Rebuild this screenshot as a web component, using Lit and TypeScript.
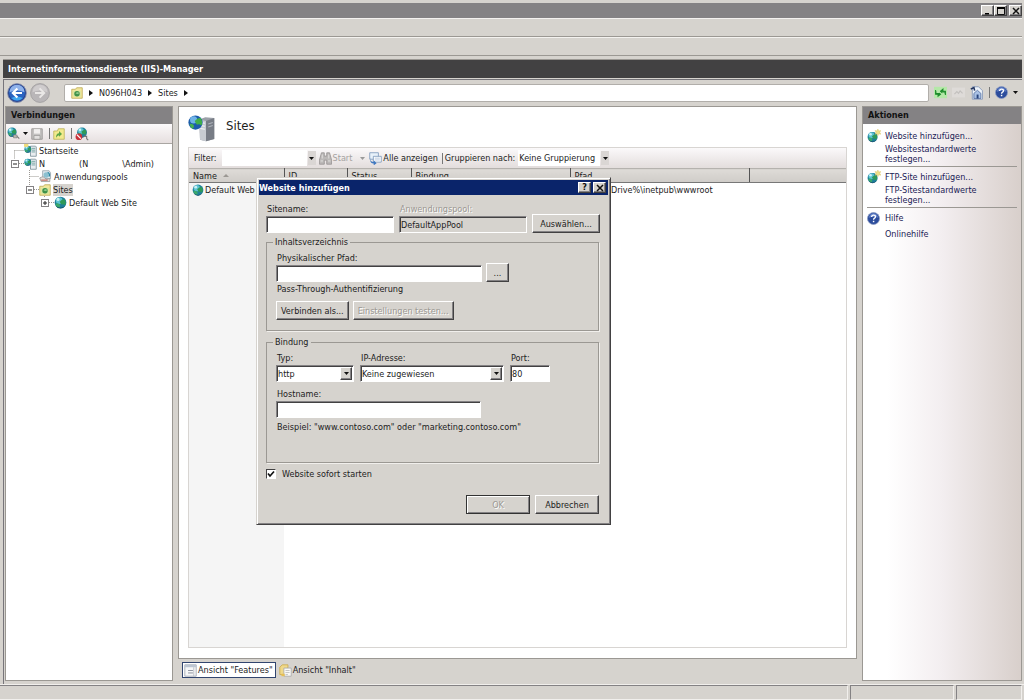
import { LitElement, html, css, svg, nothing } from "lit";
import { customElement, state } from "lit/decorators.js";
import { classMap } from "lit/directives/class-map.js";

/* ---------- shared look ---------- */
const base = css`
  :host {
    --face: #d6d3ce;
    --shadow: #848284;
    --dark: #424142;
    --navy: #0a246a;
    --font: "DejaVu Sans Condensed", "Noto Sans", sans-serif;
    font: 9px/12px var(--font);
    color: #1c1c1c;
    box-sizing: border-box;
  }
  *, *::before, *::after { box-sizing: border-box; }
  button, input, select {
    font: inherit;
    color: inherit;
    margin: 0;
    border-radius: 0;
    outline: none;
  }
  button { cursor: default; }
  svg { display: block; flex: none; }
  .raised {
    background: var(--face);
    border: 1px solid;
    border-color: #fff #424142 #424142 #fff;
    box-shadow: inset -1px -1px 0 #848284;
    padding: 0;
  }
`;

/* ---------- icons ---------- */
const frame = (w: number, h: number, vw: number, vh: number, body: unknown) =>
  html`<svg width=${w} height=${h} viewBox="0 0 ${vw} ${vh}" aria-hidden="true">${body}</svg>`;

const globeShape = svg`
  <circle cx="8" cy="8" r="7.2" fill="#1f7f9a"/>
  <circle cx="6.4" cy="5.6" r="4.2" fill="#5cc3d2"/>
  <circle cx="5" cy="4.2" r="1.9" fill="#c9f1f4"/>
  <path d="M7 7 Q11 3 13.5 4.500 Q15.400 8 13.600 11.500 Q11.500 9.500 9 10.500 Q8 9 7 7Z" fill="#2f9a58"/>
  <path d="M3 9 Q6 8.500 7.500 11 Q7.500 13.500 6.500 14.800 Q2.500 13.500 1.600 10Z" fill="#3aa86b"/>
  <path d="M2 12 Q8 17 14 12 Q11.500 15.600 8 15.500 Q4 15.500 2 12Z" fill="#0d4763"/>`;

const globe = (s = 12) => frame(s, s, 16, 16, globeShape);

const globeNew = () => frame(14, 14, 18, 18, svg`
  <g transform="translate(0 3) scale(.9)">${globeShape}</g>
  <path d="M14 0l1 2.600 2.800-.6-1.400 2.300 1.400 2.400-2.800-.500-1 2.400-1-2.400-2.700.500 1.300-2.400-1.300-2.300 2.700.600z" fill="#efe08a" stroke="#d2bd55" stroke-width=".5"/>`);

const globePlug = () => frame(13, 13, 18, 18, svg`
  <g transform="scale(.88)">${globeShape}</g>
  <path d="M9 11h5v4H9z" fill="#b9b6b1" stroke="#777" stroke-width=".8"/><path d="M14 13l3 3" stroke="#777" stroke-width="1.400"/>`);

const globeStop = () => frame(14, 14, 18, 18, svg`
  <g transform="translate(2 0) scale(.88)">${globeShape}</g>
  <circle cx="5" cy="12.500" r="4.300" fill="#c9303a"/><path d="M2.500 10l5 5" stroke="#fff" stroke-width="1.500"/>
  <path d="M11 12h4v3l2 2" fill="none" stroke="#777" stroke-width="1.400"/>`);

const serverGlobe = (star: boolean) => frame(13, 13, 18, 18, svg`
  <path d="M9 3h7l1 1v13H9z" fill="#e9edf0" stroke="#68808c"/>
  <path d="M10.500 6h5M10.500 8.500h5M10.500 11h5" stroke="#4f8c8c"/>
  <g transform="translate(0 2) scale(.66)">${globeShape}</g>
  ${star ? svg`<path d="M0 0h6v4H0z" fill="#f0dc7c"/>` : nothing}`);

const pools = () => frame(13, 13, 18, 18, svg`
  <path d="M5 1h9l2 3v8H5z" fill="#dfe9ee" stroke="#8c9ba3"/>
  <circle cx="10" cy="7" r="3.800" fill="#8cc0d0"/><path d="M12 3q4 2 2 6" fill="none" stroke="#2d8aa5" stroke-width="1.600"/>
  <path d="M1 11q5-3 7 0t7 1v4H3z" fill="#e2e0dd" stroke="#8e8e8e"/><path d="M3 14h9" stroke="#c05a4a" stroke-width="1.400"/>`);

const sitesFolder = () => frame(12, 12, 16, 16, svg`
  <path d="M1 3h5l1.500-2H15v14H1z" fill="#f3e79a" stroke="#b5a44c"/>
  <path d="M3 5h10v8H3z" fill="#d7e6a0"/>
  <circle cx="8" cy="9" r="3.600" fill="#3f9148"/><path d="M6 8.500l2-2 3 1-1.500 2z" fill="#8fc98a"/>`);

const arrowDot = (dir: "l" | "r") => frame(20, 20, 24, 24, dir === "l"
  ? svg`<circle cx="12" cy="12" r="11.300" fill="#24418f" stroke="#8c93ab" stroke-width="1"/>
      <circle cx="12" cy="12" r="9.600" fill="#2a63c0"/>
      <path d="M3 11a9 9 0 0 1 18 0q-9-4-18 0z" fill="#8fb2ea"/>
      <path d="M5 18q7 6 14 0q-7-3-14 0z" fill="#40a6ee"/>
      <path d="M12.500 6.500L7 12l5.500 5.500M7.500 12H18" fill="none" stroke="#fff" stroke-width="2.600"/>`
  : svg`<circle cx="12" cy="12" r="11.300" fill="#b9b6b8" stroke="#a09d9f" stroke-width="1"/>
      <path d="M3 11a9 9 0 0 1 18 0q-9-4-18 0z" fill="#cfcccd"/>
      <path d="M11.500 6.500L17 12l-5.500 5.500M16.500 12H6" fill="none" stroke="#e9e7e6" stroke-width="2.400"/>`);

const helpIcon = () => frame(13, 13, 16, 16, svg`
  <circle cx="8" cy="8" r="7.400" fill="#2c4c9c" stroke="#8d9cc4"/>
  <path d="M2.500 7a5.500 5.500 0 0 1 11 0q-5.500-2.500-11 0z" fill="#6482c8"/>
  <path d="M5.700 6.200q0-2.400 2.400-2.400t2.300 2q0 1.100-1.200 1.800t-1.100 1.900" fill="none" stroke="#fff" stroke-width="1.600"/><path d="M7.200 10.800h1.800v1.800H7.200z" fill="#fff"/>`);

const saveIcon = () => frame(12, 12, 16, 16, svg`
  <path d="M1 1h14v14H1z" fill="#c4c2c1" stroke="#8f8d8c"/><path d="M4 1.500h8v6H4z" fill="#f1efee"/><path d="M4 10h8v5H4z" fill="#e2e0df" stroke="#8f8d8c" stroke-width=".8"/>`);

const upIcon = () => frame(12, 12, 16, 16, svg`
  <path d="M1 4h5l1-3h8v14H1z" fill="#f2ea8e" stroke="#b8ac50"/><path d="M4 13q0-6 4-6V4l4 4-4 3.500V9.500q-2 0-4 3.500z" fill="#5ba548"/>`);

const refreshIcon = () => frame(13, 13, 16, 16, svg`
  <path d="M0 1h16v14H0z" fill="#b4e8a8"/>
  <path d="M2 5v5h4.500M5 7.500v5L8 10zM14 11V6.500H9.500M11 4v5L8 6.500z" fill="#1d8c2b" stroke="#1d8c2b" stroke-width="1.300"/>
  <path d="M3 4.500h4v4H3zM10 8h3v3h-3z" fill="#b4e8a8"/>`);

const stopIcon = () => frame(13, 13, 16, 16, svg`
  <path d="M0 2h16v12H0z" fill="#dedbd8"/><path d="M3 10l3-3 2 2 2-3 3 3" fill="none" stroke="#c3c0be" stroke-width="1.500"/>`);

const homeIcon = () => frame(14, 14, 18, 18, svg`
  <path d="M3 1h8l5 5v11H3z" fill="#edf3fa" stroke="#7b90b4"/><path d="M1 4l4-2 1 4" fill="none" stroke="#22345f" stroke-width="2"/>
  <path d="M5 9.500L9.500 5.500 14 9.500V16H5z" fill="#a9c1e4" stroke="#50699c"/><path d="M8.500 11h2.500v5H8.500z" fill="#28447c"/>`);

const bigSites = () => frame(27, 27, 36, 36, svg`
  <path d="M15 6l8-3 12 1v28l-11 3-8-2z" fill="#9ba0a8"/><path d="M24 8l11-4v28l-11 3z" fill="#777c85"/><path d="M15 6l9 2v27l-8-2z" fill="#c7cbd1"/>
  <path d="M16.500 10l6 1M16.500 14l6 1M16.500 18l6 1" stroke="#f4f6f8" stroke-width="1.600"/><path d="M27 12l6-2M27 16l6-2" stroke="#aeb3bb" stroke-width="1.400"/>
  <circle cx="10" cy="10" r="9.500" fill="#1c5cab"/><circle cx="7.500" cy="6.500" r="4.800" fill="#6fb4e8"/>
  <path d="M9 8q4-5 8-4 3 5 1 10-4-3-6-1-2-2-3-5z" fill="#3fae49"/><path d="M2 12q4-1 6 2 0 3-2 4.500-3-2-4-6.500z" fill="#46b052"/>`);

const binoculars = () => frame(13, 13, 16, 16, svg`
  <path d="M3 1h3.500v4h3V1H13l2.500 9v5h-6v-5h-3v5h-6v-5z" fill="#bcb9b8" stroke="#969392"/><path d="M2 11h3M11 11h3M4 3v5M12 3v5" stroke="#e8e6e5"/>`);

const showAll = () => frame(13, 13, 18, 18, svg`
  <path d="M1 1h12v9H1z" fill="#e8f1fa" stroke="#6d8bb3"/><path d="M6 6h11v8H6z" fill="#fff" stroke="#6d8bb3"/>
  <path d="M8 8.500h7M8 11h7" stroke="#9db4d2"/><path d="M1.500 8q0 6 5 6v-2.500l4 4-4 3V16Q1 16 1.500 8z" fill="#3f78c0"/>`);

const featuresIcon = () => frame(13, 13, 16, 16, svg`
  <path d="M1 1h14v14H1z" fill="#f6f7f8" stroke="#9aa1ab"/><path d="M1 1h14v3H1z" fill="#bcc5d2"/><path d="M5 8h6M5 11h6" stroke="#777f8c"/><path d="M12 4v11" stroke="#b4b9c1"/>`);

const contentIcon = () => frame(13, 13, 16, 16, svg`
  <path d="M1 4l3-3h7v3l-5 9H1z" fill="#f0d98a" stroke="#c9a94d"/><path d="M6 5h9v10H6z" fill="#f9f9f7" stroke="#a9a9a9"/><path d="M8 8h5M8 10.500h5M8 13h3" stroke="#b9b9b9"/><path d="M3 12h4v3H3z" fill="#e6bf55"/>`);

const triRight = () => frame(4, 6, 4, 6, svg`<path d="M0 0l4 3-4 3z" fill="#111"/>`);
const triDown = (c = "#111") => frame(5, 3, 5, 3, svg`<path d="M0 0h5L2.500 3z" fill=${c}/>`);
const closeX = () => frame(8, 8, 8, 8, svg`<path d="M1 1l6 6M7 1L1 7" stroke="#111" stroke-width="1.500"/>`);

/* ---------- "add website" dialog ---------- */
@customElement("website-dialog")
export class WebsiteDialog extends LitElement {
  static styles = [base, css`
    :host {
      display: block;
      width: 355px;
      padding: 1px;
      background: var(--face);
      border: 1px solid;
      border-color: var(--face) #424142 #424142 var(--face);
      box-shadow: inset 1px 1px 0 #fff, inset -1px -1px 0 #848284;
    }
    .title {
      display: flex;
      align-items: center;
      gap: 2px;
      height: 15px;
      margin: 1px 1px 0;
      padding: 0 2px 0 0;
      background: var(--navy);
      color: #fff;
      font-weight: bold;
    }
    .title h2 { flex: 1; margin: 0; font-size: 9px; }
    .title button {
      display: grid;
      place-items: center;
      width: 13px;
      height: 11px;
      color: #111;
      font-weight: bold;
      line-height: 9px;
    }
    form { padding: 8px 10px 9px 8px; }
    .top { display: grid; grid-template-columns: 128px 128px 68px; column-gap: 5px; align-items: end; }
    .field { display: flex; flex-direction: column; gap: 1px; }
    .field label { padding-left: 1px; }
    input.box, select {
      width: 100%;
      height: 17px;
      padding: 0 1px;
      background: #fff;
      border: 1px solid;
      border-color: #848284 #fff #fff #848284;
      box-shadow: inset 1px 1px 0 #424142;
      appearance: none;
    }
    input.box:disabled { background: var(--face); color: #1c1c1c; }
    .off { color: #9b9893; text-shadow: 1px 1px 0 #fff; }
    .push { height: 19px; padding: 0 4px; white-space: nowrap; }
    .push:disabled { color: #9b9893; text-shadow: 1px 1px 0 #fff; }
    fieldset {
      min-width: 0;
      margin: 0;
      padding: 4px 9px 0;
      border: 1px solid #9b9893;
      box-shadow: 1px 1px 0 #f1efec;
    }
    legend { margin-left: -3px; padding: 0 2px; }
    .dir { height: 95px; margin-top: 3px; }
    .bind { height: 127px; margin-top: 5px; }
    .row { display: flex; align-items: flex-end; gap: 4px; }
    .path { width: 206px; }
    .note { margin: 1px 0 6px 1px; }
    .example { margin: 3px 0 0 1px; }
    .binding { display: grid; grid-template-columns: 78px 144px 40px; column-gap: 6px; }
    .combo { position: relative; }
    .combo i {
      position: absolute;
      top: 2px;
      right: 2px;
      display: grid;
      place-items: center;
      width: 12px;
      height: 13px;
      pointer-events: none;
    }
    .host { width: 205px; margin-top: 6px; }
    .check { display: flex; align-items: center; gap: 6px; margin-top: 5px; }
    .check input {
      display: grid;
      width: 10px;
      height: 10px;
      appearance: none;
      background: #fff;
      border: 1px solid;
      border-color: #424142 #fff #fff #424142;
    }
    .check input:checked {
      background: #fff url("data:image/svg+xml,%3Csvg xmlns='http://www.w3.org/2000/svg' viewBox='0 0 8 8'%3E%3Cpath d='M1 3.500L3 6 7 1.500' fill='none' stroke='%23111' stroke-width='1.700'/%3E%3C/svg%3E") center / 8px 8px;
    }
    .actions { display: flex; justify-content: flex-end; gap: 5px; margin-top: 15px; }
    .actions button { width: 64px; }
    .push.default { border: 1px solid #333; box-shadow: inset 1px 1px 0 #fff, inset -1px -1px 0 #848284; }
  `];

  @state() private start = true;

  render() {
    return html`
      <div class="title">
        <h2>Website hinzufügen</h2>
        <button class="raised" aria-label="Hilfe">?</button>
        <button class="raised" aria-label="Schließen">${closeX()}</button>
      </div>
      <form @submit=${(e: Event) => e.preventDefault()}>
        <div class="top">
          <div class="field"><label for="name">Sitename:</label><input class="box" id="name" /></div>
          <div class="field"><label class="off" for="pool">Anwendungspool:</label><input class="box" id="pool" value="DefaultAppPool" disabled /></div>
          <button type="button" class="raised push">Auswählen...</button>
        </div>
        <fieldset class="dir">
          <legend>Inhaltsverzeichnis</legend>
          <div class="row">
            <div class="field path"><label for="path">Physikalischer Pfad:</label><input class="box" id="path" /></div>
            <button type="button" class="raised push">&nbsp;...&nbsp;</button>
          </div>
          <p class="note">Pass-Through-Authentifizierung</p>
          <div class="row">
            <button type="button" class="raised push">Verbinden als...</button>
            <button type="button" class="raised push" disabled>Einstellungen testen...</button>
          </div>
        </fieldset>
        <fieldset class="bind">
          <legend>Bindung</legend>
          <div class="binding">
            <div class="field"><label for="type">Typ:</label>
              <div class="combo"><select id="type"><option>http</option></select><i class="raised">${triDown()}</i></div></div>
            <div class="field"><label for="ip">IP-Adresse:</label>
              <div class="combo"><select id="ip"><option>Keine zugewiesen</option></select><i class="raised">${triDown()}</i></div></div>
            <div class="field"><label for="port">Port:</label><input class="box" id="port" value="80" /></div>
          </div>
          <div class="field host"><label for="host">Hostname:</label><input class="box" id="host" /></div>
          <p class="example">Beispiel: "www.contoso.com" oder "marketing.contoso.com"</p>
        </fieldset>
        <label class="check"><input type="checkbox" .checked=${this.start}
          @change=${(e: Event) => (this.start = (e.target as HTMLInputElement).checked)} />Website sofort starten</label>
        <div class="actions">
          <button class="raised push default" disabled>OK</button>
          <button type="button" class="raised push">Abbrechen</button>
        </div>
      </form>`;
  }
}

/* ---------- manager window ---------- */
@customElement("app-root")
export class AppRoot extends LitElement {
  static styles = [base, css`
    :host {
      position: relative;
      display: flex;
      flex-direction: column;
      height: 100vh;
      overflow: hidden;
      background: var(--face);
    }
    website-dialog { position: absolute; left: 25%; top: 177px; }
    h1, h2, p, ul { margin: 0; padding: 0; }
    a { color: #1b1b55; text-decoration: none; }
    .caption {
      display: flex;
      justify-content: flex-end;
      align-items: center;
      height: 15px;
      margin: 3px 2px 0 0;
      background: var(--shadow);
    }
    .caption button { display: grid; place-items: center; width: 13px; height: 11px; }
    .caption button:last-child { margin-left: 2px; }
    .band { height: 19px; border-top: 1px solid #f4f2ef; border-bottom: 1px solid #9b9893; margin-right: 2px; }
    .mdi {
      height: 19px;
      margin: 3px 2px 0 3px;
      padding: 0 5px;
      border-top: 1px solid #9b9893;
      background: var(--dark);
      color: #fff;
      font-size: 9px;
      line-height: 18px;
    }
    .frame {
      flex: 1;
      display: flex;
      flex-direction: column;
      min-height: 0;
      margin: 1px 2px 0 3px;
      border-top: 1px solid #77757a;
      border-left: 1px solid #77757a;
    }
    .nav { display: flex; align-items: center; height: 25px; margin-bottom: 1px; padding: 0 4px 0 3px; }
    .nav > svg + svg { margin-left: 3px; }
    .crumbs {
      flex: 1;
      display: flex;
      align-items: center;
      gap: 6px;
      height: 18px;
      margin: 0 5px 0 14px;
      padding: 0 6px;
      background: #fff;
      border: 1px solid #b1aeaa;
      border-radius: 2px;
    }
    .crumbs a { color: inherit; }
    .tools { display: flex; align-items: center; gap: 5px; }
    .tools i, .bar i, .mini i { width: 1px; height: 11px; background: #777; }
    .panes { flex: 1; display: grid; grid-template-columns: 168px 1fr 160px; column-gap: 5px; min-height: 0; padding: 0 0 3px 1px; }
    .pane { display: flex; flex-direction: column; min-height: 0; min-width: 0; border: 1px solid #9b9893; background: #fff; }
    .head { height: 17px; padding: 0 5px; background: var(--shadow); color: #111; font-size: 9px; line-height: 17px; }
    .mini {
      display: flex;
      align-items: center;
      gap: 3px;
      height: 20px;
      padding: 0 1px;
      background: linear-gradient(#fbf9fa, #e6dfdf);
      border-bottom: 1px solid #a9a6a2;
    }
    .mini i { margin-left: 3px; }
    .tree {
      list-style: none;
      padding-left: 5px;
      background: url("data:image/svg+xml,%3Csvg xmlns='http://www.w3.org/2000/svg' width='60' height='66'%3E%3Cpath d='M8.5 6.500V15M8.500 6.500H18M13 19.500H18M23.500 26V41M23.500 32.500H33M28 45.500H33M38.500 52V54M43 58.500H48' fill='none' stroke='%239b9893' stroke-dasharray='1 1'/%3E%3C/svg%3E") no-repeat;
    }
    .tree li { display: flex; align-items: center; height: 13px; white-space: nowrap; }
    .tree svg { margin-right: 2px; }
    .tree .l1 { padding-left: 15px; }
    .tree .l2 { padding-left: 30px; }
    .slot { flex: none; width: 13px; }
    .toggle {
      display: grid;
      place-items: center;
      width: 8px;
      height: 8px;
      padding: 0;
      background: #fff;
      border: 1px solid #848284;
    }
    .sel { background: var(--face); }
    .gap { margin-right: 34px; }
    .mid { display: flex; flex-direction: column; min-width: 0; min-height: 0; }
    .mid .pane { flex: 1; }
    .banner { display: flex; align-items: center; gap: 11px; padding: 2px 9px 0; height: 40px; }
    .banner h1 { font-size: 13px; font-weight: normal; line-height: 20px; padding-bottom: 5px; }
    .list {
      flex: 1;
      display: flex;
      flex-direction: column;
      min-height: 0;
      margin: 0 9px 10px;
      border: 1px solid #d8d5d2;
      background: linear-gradient(to right, #f5f5f5 95px, #fff 95px);
    }
    .bar {
      display: flex;
      align-items: center;
      height: 20px;
      padding-left: 5px;
      background: linear-gradient(#fbf9fa, #e3dddc);
      white-space: nowrap;
    }
    .bar input, .bar select { height: 16px; padding: 0 1px; border: 0; background: #fff; appearance: none; }
    .bar input { width: 85px; margin-left: 5px; }
    .bar select { width: 82px; margin-left: 3px; }
    .bar button { display: flex; align-items: center; gap: 1px; padding: 0; border: 0; background: none; }
    .bar button:disabled { color: #a5a2a0; }
    .bar .drop { display: grid; place-items: center; width: 8px; height: 14px; margin-left: 1px; background: #dad6d4; }
    .bar .find { margin: 0 8px 0 3px; }
    .bar .all { margin: 0 4px; }
    .bar i { margin-right: 2px; }
    table { width: 100%; border-collapse: collapse; table-layout: fixed; }
    th {
      height: 14px;
      padding: 1px 4px 0;
      background: linear-gradient(#dedbd7, #cfccc8);
      border-right: 1px solid #555;
      border-top: 1px solid #b5b2ae;
      border-bottom: 1px solid #777;
      font-weight: normal;
      text-align: left;
      line-height: 12px;
    }
    th:last-child { border-right: 0; }
    th span { display: inline-block; margin-left: 6px; vertical-align: 2px; }
    td { height: 14px; padding: 0 3px; white-space: nowrap; }
    .c1 { width: 95px; } .c2 { width: 63px; } .c3 { width: 64px; } .c4 { width: 159px; } .c5 { width: 179px; }
    .site { display: flex; align-items: center; gap: 1px; }
    .views { display: flex; gap: 1px; padding: 3px 4px 3px; }
    .views button { display: flex; align-items: center; gap: 1px; height: 16px; padding: 0 2px 0 1px; background: none; border: 1px solid transparent; white-space: nowrap; }
    .views .on { background: #fff; border-color: #31456f; }
    .acts { flex: 1; background: linear-gradient(to right, #fff 15%, #f3eef0 50%, #d8cfcb); padding: 4px 4px; }
    .group { display: grid; grid-template-columns: 14px 1fr; column-gap: 4px; align-items: center; padding-bottom: 2px; }
    .group + .group { border-top: 1px solid #9b9893; padding-top: 2px; }
    .group a { grid-column: 2; padding: 1px 0; }
    .group a.multi { width: 100px; padding: 0; line-height: 10px; }
    .group svg { grid-column: 1; }
    .group a.first { line-height: 14px; }
    .group.help a { line-height: 14px; }
    .status { display: grid; grid-template-columns: 1fr 104px 66px; gap: 2px; height: 16px; padding: 0 2px 0 0; border-top: 1px solid #f1efec; }
    .status span { border: 1px solid; border-color: #848284 #f1efec #f1efec #848284; }
    .status span:first-child { border-left: 0; }
  `];

  private tree = [
    { label: "Startseite", icon: () => serverGlobe(true), level: "", toggle: "" },
    { label: "", icon: () => serverGlobe(false), level: "", toggle: "-" },
    { label: "Anwendungspools", icon: pools, level: "l1", toggle: "" },
    { label: "Sites", icon: sitesFolder, level: "l1", toggle: "-", selected: true },
    { label: "Default Web Site", icon: () => globe(13), level: "l2", toggle: "+" },
  ];

  private toggle(kind: string) {
    return html`<button class="toggle" aria-label="Knoten">${frame(6, 6, 6, 6,
      svg`<path d=${kind === "+" ? "M1 3h4M3 1v4" : "M1 3h4"} stroke="#222"/>`)}</button>`;
  }

  render() {
    return html`
      <div class="caption">
        <button class="raised" aria-label="Minimieren">${frame(8, 8, 8, 8, svg`<path d="M1 6h4v1.500H1z"/>`)}</button>
        <button class="raised" aria-label="Maximieren">${frame(8, 8, 8, 8, svg`<path d="M.5 1h7v6.500h-7z" fill="none" stroke="#111"/><path d="M0 0h8v2H0z"/>`)}</button>
        <button class="raised" aria-label="Schließen">${closeX()}</button>
      </div>
      <div class="band"></div>
      <div class="band"></div>
      <h1 class="mdi">Internetinformationsdienste (IIS)-Manager</h1>
      <div class="frame">
        <nav class="nav">
          ${arrowDot("l")}${arrowDot("r")}
          <div class="crumbs">${sitesFolder()}${triRight()}<a href="#server">N096H043</a>${triRight()}<a href="#sites">Sites</a>${triRight()}</div>
          <div class="tools">${refreshIcon()}${stopIcon()}${homeIcon()}<i></i>${helpIcon()}${triDown()}</div>
        </nav>
        <div class="panes">
          <section class="pane">
            <h2 class="head">Verbindungen</h2>
            <div class="mini">${globePlug()}${triDown()}${saveIcon()}<i></i>${upIcon()}<i></i>${globeStop()}</div>
            <ul class="tree">
              ${this.tree.map((n) => html`
                <li class=${classMap({ l1: n.level === "l1", l2: n.level === "l2" })}>
                  <span class="slot">${n.toggle ? this.toggle(n.toggle) : nothing}</span>${n.icon()}
                  ${n.label
                    ? html`<span class=${classMap({ sel: !!n.selected })}>${n.label}</span>`
                    : html`<span class="gap">N</span><span class="gap">(N</span><span>\\Admin)</span>`}
                </li>`)}
            </ul>
          </section>
          <div class="mid">
            <section class="pane">
              <div class="banner">${bigSites()}<h1>Sites</h1></div>
              <div class="list">
                <div class="bar">
                  <label for="filter">Filter:</label><input id="filter" />
                  <button class="drop" aria-label="Filterliste">${triDown()}</button>
                  <button class="find" disabled>${binoculars()}Start</button>${triDown("#999")}
                  <button class="all">${showAll()}Alle anzeigen</button><i></i>
                  <label for="group">Gruppieren nach:</label>
                  <select id="group"><option>Keine Gruppierung</option></select>
                  <button class="drop" aria-label="Gruppierungsliste">${triDown()}</button>
                </div>
                <table>
                  <thead><tr>
                    <th class="c1">Name<span>${frame(6, 3, 6, 3, svg`<path d="M0 3h6L3 0z" fill="#9b9893"/>`)}</span></th>
                    <th class="c2">ID</th><th class="c3">Status</th><th class="c4">Bindung</th><th class="c5">Pfad</th><th></th>
                  </tr></thead>
                  <tbody><tr>
                    <td><div class="site">${globe(12)}Default Web Site</div></td>
                    <td></td><td></td><td></td><td>%SystemDrive%\\inetpub\\wwwroot</td><td></td>
                  </tr></tbody>
                </table>
              </div>
            </section>
            <div class="views">
              <button class="on">${featuresIcon()}Ansicht "Features"</button>
              <button>${contentIcon()}Ansicht "Inhalt"</button>
            </div>
          </div>
          <section class="pane">
            <h2 class="head">Aktionen</h2>
            <div class="acts">
              <div class="group">${globeNew()}<a class="first" href="#add">Website hinzufügen...</a><a class="multi" href="#defaults">Websitestandardwerte festlegen...</a></div>
              <div class="group">${globeNew()}<a class="first" href="#ftp">FTP-Site hinzufügen...</a><a class="multi" href="#ftpdefaults">FTP-Sitestandardwerte festlegen...</a></div>
              <div class="group help">${helpIcon()}<a href="#help">Hilfe</a><a href="#online">Onlinehilfe</a></div>
            </div>
          </section>
        </div>
      </div>
      <div class="status"><span></span><span></span><span></span></div>
      <website-dialog></website-dialog>`;
  }
}
